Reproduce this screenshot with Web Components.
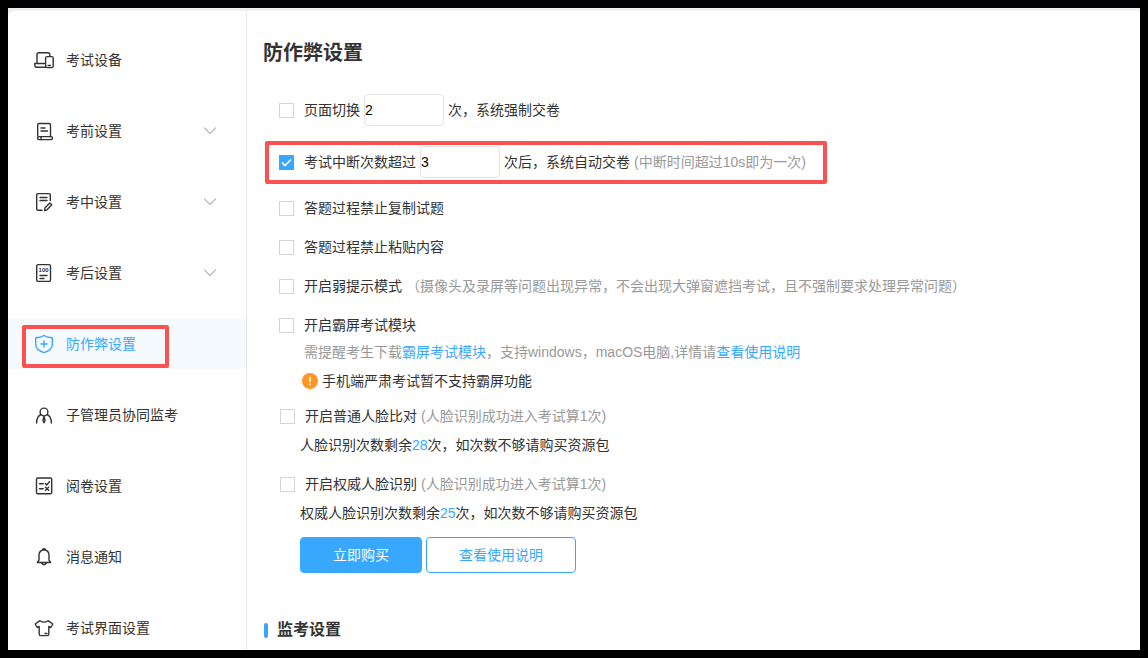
<!DOCTYPE html>
<html lang="zh-CN">
<head>
<meta charset="utf-8">
<title>防作弊设置</title>
<style>
  html, body { margin: 0; height: 100%; }
  body {
    --blue: #38a8ff;
    --muted: #999;
    --mark: #fb5151;
    background: #000;
    color: #333;
    font: 14px/20px "Liberation Sans", "Noto Sans CJK SC", sans-serif;
  }
</style>
</head>
<body>
<exam-app>
  <side-nav slot="nav">
    <nav-item icon="device">考试设备</nav-item>
    <nav-item icon="before" expandable>考前设置</nav-item>
    <nav-item icon="during" expandable>考中设置</nav-item>
    <nav-item icon="after" expandable>考后设置</nav-item>
    <nav-item icon="shield" active>防作弊设置</nav-item>
    <nav-item icon="admin">子管理员协同监考</nav-item>
    <nav-item icon="review">阅卷设置</nav-item>
    <nav-item icon="bell">消息通知</nav-item>
    <nav-item icon="shirt">考试界面设置</nav-item>
  </side-nav>
  <cheat-settings></cheat-settings>
</exam-app>

<script>
const define = (name, html, setup) => {
  const template = document.createElement('template');
  template.innerHTML = html;
  customElements.define(name, class extends HTMLElement {
    constructor() {
      super();
      this.attachShadow({ mode: 'open' }).append(template.content.cloneNode(true));
    }
    connectedCallback() { if (setup) setup(this, this.shadowRoot); }
  });
};

const ICONS = {
  device: '<path d="M3 13V4.500Q3 2.700 4.800 2.700H14Q15.800 2.700 15.800 4.500V6M11 13.500H.8V15.500Q.8 17.300 2.500 17.300H12"/><rect x="11.600" y="6.600" width="7.600" height="11" rx="1.600"/><path d="M14 15.500H16.500"/>',
  before: '<path d="M3.700 15V4Q3.700 2.500 5.200 2.500H15Q16.500 2.500 16.500 4V15.500M7 7H11M7 10H13.500"/><rect x="3.500" y="15.600" width="15" height="3" rx="1.500"/><path d="M7 15.600V18.500"/>',
  during: '<path d="M8 18.300H4Q2.700 18.300 2.700 17V2.900Q2.700 1.600 4 1.600H15Q16.300 1.600 16.300 2.900V8.500M6 5.500H13M6 8.500H13"/><path d="M10.500 18.500L11 15.700L15.800 10.900L17.700 12.800L13 17.800Z"/>',
  after: '<rect x="2.700" y="1.600" width="13.800" height="16.800" rx="1.500"/><text x="9.600" y="8.800" text-anchor="middle" font-size="6" font-weight="700" stroke="none" fill="currentColor">100</text><path d="M6 12.500H13M6 15.500H10"/>',
  shield: '<path d="M10 1.500Q13 3.500 18.300 3.700V10.500Q18.300 16 10 18.700Q1.700 16 1.700 10.500V3.700Q7 3.500 10 1.500ZM10 7V13M7 10H13"/>',
  admin: '<circle cx="10" cy="7" r="3.900"/><path d="M6.800 9.500Q2.700 11.500 2.600 18M13.200 9.500Q17.300 11.500 17.400 18M10 11.500L8.900 15.500L10 17.800L11.100 15.500Z"/>',
  review: '<rect x="2.500" y="2" width="15.200" height="15.800" rx="1.300"/><path d="M5.500 7.700H9.200M5.500 12.700H9.200M11.300 7.500L12.700 9L15.500 5.700M11.500 11.200L14.700 14.300M14.700 11.200L11.500 14.300"/>',
  bell: '<path d="M3.400 15.500L5 13V8Q5.200 3.500 10 2.800Q14.800 3.500 15 8V13L16.600 15.500ZM8.500 2.500Q10 1 11.500 2.500M7.700 16.300Q10 19.300 12.300 16.300"/>',
  shirt: '<path d="M6 2.700L1.200 6L3.200 9.500L5.200 8.500V16Q5.200 17.600 6.800 17.600H13.200Q14.800 17.600 14.800 16V8.500L16.800 9.500L18.800 6L14 2.700Q10 5.500 6 2.700ZM11 15.500H13"/>'
};

define('exam-app', `
  <style>
    :host { display: flex; box-sizing: border-box; height: 100vh; border: 8px solid #000; padding-top: 3px;
      background: #ededf2; }
    .page { display: flex; flex: 1; min-width: 0; background: #fff; border-top-left-radius: 6px; overflow: hidden; }
    aside { flex: 0 0 238px; border-right: 1px solid #e6e6e6; }
    main { flex: 1; min-width: 0; }
    aside, main { overflow-y: auto; scrollbar-width: none; }
  </style>
  <div class="page">
    <aside><slot name="nav"></slot></aside>
    <main><slot></slot></main>
  </div>`);

define('side-nav', `
  <style>
    :host { display: block; }
    nav { display: flex; flex-direction: column; gap: 20px; padding: 23px 0; }
  </style>
  <nav><slot></slot></nav>`);

define('nav-item', `
  <style>
    :host { display: block; }
    a { position: relative; display: flex; align-items: center; gap: 12px; height: 51px;
      padding: 0 30px 0 26px; color: inherit; text-decoration: none; }
    :host([active]) a { color: var(--blue); background: #f5faff; }
    :host([active]) a::after { content: ""; position: absolute; inset: 7px 77px 1px 14px;
      border: 4px solid var(--mark); border-radius: 2px; }
    svg { flex: none; fill: none; stroke: currentColor; stroke-width: 1.4; stroke-linejoin: round; stroke-linecap: round; }
    .label { flex: 1; }
    .chevron { display: none; stroke: #bbb; stroke-width: 1.2; }
    :host([expandable]) .chevron { display: block; }
  </style>
  <a href="#">
    <svg class="icon" width="20" height="20" viewBox="0 0 20 20" aria-hidden="true"></svg>
    <span class="label"><slot></slot></span>
    <svg class="chevron" width="12" height="8" viewBox="0 0 12 8" aria-hidden="true"><path d="M.5 1L6 6.500L11.500 1"/></svg>
  </a>`, (el, root) => {
    root.querySelector('.icon').innerHTML = ICONS[el.getAttribute('icon')];
    if (el.hasAttribute('active')) root.querySelector('a').setAttribute('aria-current', 'page');
  });

define('check-row', `
  <style>
    :host { display: block; }
    .row { position: relative; display: flex; align-items: center; gap: 4px; min-height: 20px; }
    input { appearance: none; flex: none; width: 15px; height: 15px; margin: 0 6px 0 0;
      border: 1px solid #d3d5dc; background: #fff; }
    input:checked { border-color: var(--blue);
      background: var(--blue) url("data:image/svg+xml,%3Csvg xmlns='http://www.w3.org/2000/svg' viewBox='0 0 13 13'%3E%3Cpath d='M2 6.500L5 9.500L11 3.500' fill='none' stroke='white' stroke-width='1.700'/%3E%3C/svg%3E"); }
    :host([marked]) .row::after { content: ""; position: absolute; inset: -5px auto -6px -14px; width: 554px;
      border: 4px solid var(--mark); border-radius: 2px; pointer-events: none; }
    ::slotted([slot=note]) { color: var(--muted); }
  </style>
  <div class="row">
    <input type="checkbox" id="box">
    <label for="box"><slot></slot></label>
    <slot name="more"></slot>
    <slot name="note"></slot>
  </div>`, (el, root) => {
    root.querySelector('input').checked = el.hasAttribute('checked');
  });

define('count-field', `
  <style>
    :host { display: block; }
    input { display: block; box-sizing: border-box; width: 80px; height: 32px; padding: 0; color: #000;
      border: 1px solid #e4e4e8; border-radius: 4px; background: #fff; font: inherit; outline: none; }
  </style>
  <input type="text" inputmode="numeric">`, (el, root) => {
    const input = root.querySelector('input');
    input.value = el.getAttribute('value');
    input.setAttribute('aria-label', el.getAttribute('label'));
  });

define('action-button', `
  <style>
    :host { display: block; }
    button { display: block; height: 36px; padding: 0 32px; border: 1px solid var(--blue); border-radius: 4px;
      background: #fff; color: var(--blue); font: inherit; cursor: pointer; }
    :host([primary]) button { background: var(--blue); color: #fff; }
  </style>
  <button type="button"><slot></slot></button>`);

define('cheat-settings', `
  <style>
    :host { display: block; padding: 28px 16px; }
    h1 { margin: 0 0 27px; font-size: 20px; line-height: 28px; }
    .inputs, .checks { display: flex; flex-direction: column; gap: 20px; margin: 0 0 20px 16px; }
    .checks { gap: 19px; margin-bottom: 7px; }
    p { margin: 0; }
    a { color: var(--blue); text-decoration: none; }
    .hint { margin-left: 41px; color: var(--muted); }
    .notice { display: flex; align-items: center; gap: 4px; margin: 9px 0 15px 39px; }
    .face { margin: 0 0 19px 17px; }
    .face p { margin: 9px 0 0 20px; }
    .face.last { margin-bottom: 14px; }
    b { color: var(--blue); font-weight: 400; }
    .actions { display: flex; gap: 4px; margin: 0 0 47px 37px; }
    h2 { display: flex; align-items: center; gap: 9px; margin: 0 0 0 1px; font-size: 16px; line-height: 20px; }
    h2::before { content: ""; width: 4px; height: 15px; border-radius: 2px; background: var(--blue); }
  </style>
  <h1>防作弊设置</h1>
  <div class="inputs">
    <check-row>页面切换
      <count-field slot="more" value="2" label="页面切换次数"></count-field>
      <span slot="more">次，系统强制交卷</span>
    </check-row>
    <check-row checked marked>考试中断次数超过
      <count-field slot="more" value="3" label="考试中断次数"></count-field>
      <span slot="more">次后，系统自动交卷</span>
      <span slot="note">(中断时间超过10s即为一次)</span>
    </check-row>
  </div>
  <div class="checks">
    <check-row>答题过程禁止复制试题</check-row>
    <check-row>答题过程禁止粘贴内容</check-row>
    <check-row>开启弱提示模式<span slot="note">（摄像头及录屏等问题出现异常，不会出现大弹窗遮挡考试，且不强制要求处理异常问题）</span></check-row>
    <check-row>开启霸屏考试模块</check-row>
  </div>
  <p class="hint">需提醒考生下载<a href="#">霸屏考试模块</a>，支持windows，macOS电脑,详情请<a href="#">查看使用说明</a></p>
  <p class="notice">
    <svg width="16" height="16" viewBox="0 0 16 16" aria-hidden="true"><circle cx="8" cy="8" r="8" fill="#ff9626"/><path d="M8 4V9M8 10.500V12" stroke="#fff" stroke-width="1.600"/></svg>
    <span>手机端严肃考试暂不支持霸屏功能</span>
  </p>
  <div class="face">
    <check-row>开启普通人脸比对<span slot="note">(人脸识别成功进入考试算1次)</span></check-row>
    <p>人脸识别次数剩余<b>28</b>次，如次数不够请购买资源包</p>
  </div>
  <div class="face last">
    <check-row>开启权威人脸识别<span slot="note">(人脸识别成功进入考试算1次)</span></check-row>
    <p>权威人脸识别次数剩余<b>25</b>次，如次数不够请购买资源包</p>
  </div>
  <div class="actions">
    <action-button primary>立即购买</action-button>
    <action-button>查看使用说明</action-button>
  </div>
  <h2>监考设置</h2>`);
</script>
</body>
</html>
